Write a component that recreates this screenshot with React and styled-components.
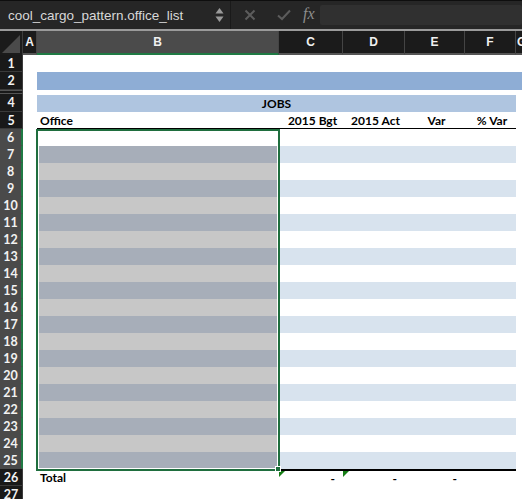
import React from 'react';
import styled, { createGlobalStyle } from 'styled-components';

const GlobalStyle = createGlobalStyle`
  html, body {
    margin: 0;
    padding: 0;
    background: #ffffff;
    overflow: hidden;
  }
  * { box-sizing: border-box; }
`;

const COLS = '23px 14px 242px 64px 62px 60px 51px 1fr';

const headers = ['2015 Bgt', '2015 Act', 'Var', '% Var'];

const App = () => {
  const dataRows = [];
  for (let n = 6; n <= 25; n++) {
    const odd = n % 2 === 1 && n > 6;
    dataRows.push(
      <SheetRow key={n} $h={17}>
        <RowHead $selected>{n}</RowHead>
        <Cell />
        <Cell $bg={n === 6 ? '#ffffff' : odd ? '#a7aeb9' : '#c7c7c7'} $inset />
        {headers.map((h) => (
          <Cell key={h} $bg={odd ? '#d8e3ee' : '#ffffff'} />
        ))}
        <Cell />
      </SheetRow>
    );
  }

  return (
    <Page>
      <GlobalStyle />
      <Toolbar>
        <NameBox>
          <NameText>cool_cargo_pattern.office_list</NameText>
          <Spinner>
            <svg width="9" height="16" viewBox="0 0 9 16">
              <path d="M4.5 1 L8.5 6.5 L0.5 6.5 Z" fill="#9a9a9a" />
              <path d="M4.5 15 L8.5 9.5 L0.5 9.5 Z" fill="#9a9a9a" />
            </svg>
          </Spinner>
        </NameBox>
        <ToolDivider />
        <ToolIcon>
          <svg width="12" height="12" viewBox="0 0 12 12">
            <path d="M1.5 1.5 L10.5 10.5 M10.5 1.5 L1.5 10.5" stroke="#5c5c5c" strokeWidth="2" />
          </svg>
        </ToolIcon>
        <ToolIcon>
          <svg width="14" height="12" viewBox="0 0 14 12">
            <path d="M1 6.5 L5 10 L13 1.5" stroke="#5c5c5c" strokeWidth="2" fill="none" />
          </svg>
        </ToolIcon>
        <FxLabel>fx</FxLabel>
        <FormulaInput />
      </Toolbar>

      <Sheet>
        <HeaderRow>
          <Corner>
            <svg width="18" height="18" viewBox="0 0 18 18">
              <path d="M18 0 L18 18 L0 18 Z" fill="#4a4a4a" />
            </svg>
          </Corner>
          <ColHead>A</ColHead>
          <ColHead $selected>B</ColHead>
          <ColHead>C</ColHead>
          <ColHead>D</ColHead>
          <ColHead>E</ColHead>
          <ColHead>F</ColHead>
          <ColHead $left>G</ColHead>
        </HeaderRow>

        <SheetRow $h={17}>
          <RowHead>1</RowHead>
        </SheetRow>

        <SheetRow $h={18}>
          <RowHead>2</RowHead>
          <Cell />
          <Band $bg="#8eadd5" $span="3 / -1" />
        </SheetRow>

        <HiddenRow>
          <HiddenHead />
        </HiddenRow>

        <SheetRow $h={18}>
          <RowHead>4</RowHead>
          <Cell />
          <Band $bg="#afc5e0" $span="3 / 8" $top>
            JOBS
          </Band>
        </SheetRow>

        <SheetRow $h={17}>
          <RowHead>5</RowHead>
          <Cell />
          <Cell $bold $line="bottom">Office</Cell>
          {headers.map((h) => (
            <Cell key={h} $bold $align="center" $line="bottom">
              {h}
            </Cell>
          ))}
        </SheetRow>

        {dataRows}

        <SheetRow $h={17}>
          <RowHead $dark>26</RowHead>
          <Cell />
          <Cell $bold>Total</Cell>
          <Cell $bold $align="right" $line="top" $flag>-</Cell>
          <Cell $bold $align="right" $line="top" $flag>-</Cell>
          <Cell $bold $align="right" $line="top">-</Cell>
          <Cell $line="top" />
        </SheetRow>

        <SheetRow $h={17}>
          <RowHead $dark>27</RowHead>
        </SheetRow>

        <Selection>
          <Handle />
        </Selection>
      </Sheet>
    </Page>
  );
};

const Page = styled.div`
  width: 522px;
  height: 499px;
  overflow: hidden;
  background: #ffffff;
`;

const Toolbar = styled.div`
  display: flex;
  align-items: center;
  height: 31px;
  background: #262626;
  border-top: 1px solid #0e0e0e;
  border-bottom: 2px solid #9b9b9b;
`;

const NameBox = styled.div`
  display: flex;
  align-items: center;
  justify-content: space-between;
  width: 230px;
  padding: 0 8px 0 8px;
`;

const NameText = styled.span`
  font-family: 'Liberation Sans', Arial, sans-serif;
  font-size: 13.5px;
  color: #d8d8d8;
`;

const Spinner = styled.span`
  display: flex;
  margin-right: -2px;
`;

const ToolDivider = styled.div`
  width: 1px;
  height: 28px;
  background: #1a1a1a;
`;

const ToolIcon = styled.span`
  display: flex;
  align-items: center;
  justify-content: center;
  width: 30px;
  margin-left: 4px;
`;

const FxLabel = styled.span`
  font-family: 'Liberation Serif', 'Times New Roman', serif;
  font-style: italic;
  font-size: 16px;
  color: #8d8d8d;
  margin: 0 5px 0 4px;
  padding-bottom: 2px;
`;

const FormulaInput = styled.div`
  flex: 1;
  height: 20px;
  background: #303030;
  border-radius: 2px;
`;

const Sheet = styled.div`
  position: relative;
`;

const HeaderRow = styled.div`
  display: grid;
  grid-template-columns: ${COLS};
  height: 24px;
  background: #1b1b1b;
`;

const Corner = styled.div`
  display: flex;
  align-items: flex-end;
  justify-content: flex-end;
  padding: 0 2px 2px 0;
  border-right: 1px solid #3c3c3c;
`;

const ColHead = styled.div`
  display: flex;
  align-items: center;
  justify-content: ${(p) => (p.$left ? 'flex-start' : 'center')};
  padding-left: ${(p) => (p.$left ? '1px' : '0')};
  font-family: 'Liberation Sans', Arial, sans-serif;
  font-weight: 700;
  font-size: 12px;
  color: #f0f0f0;
  background: ${(p) => (p.$selected ? '#4b4b4b' : 'transparent')};
  border-right: 1px solid #444;
  border-bottom: 2px solid ${(p) => (p.$selected ? '#1f7a44' : '#555')};
`;

const SheetRow = styled.div`
  display: grid;
  grid-template-columns: ${COLS};
  height: ${(p) => p.$h}px;
`;

const RowHead = styled.div`
  display: flex;
  align-items: center;
  justify-content: center;
  font-family: Lato, 'Liberation Sans', sans-serif;
  font-weight: 700;
  font-size: 12.5px;
  color: #f2f2f2;
  background: ${(p) => (p.$selected ? '#4a4a4a' : '#191919')};
  border-right: ${(p) => (p.$selected ? '2px solid #1f7a44' : '1px solid #3c3c3c')};
  border-bottom: 1px solid ${(p) => (p.$selected ? '#4a4a4a' : '#3a3a3a')};
`;

const HiddenRow = styled.div`
  display: grid;
  grid-template-columns: ${COLS};
  height: 4px;
`;

const HiddenHead = styled.div`
  background: #191919;
  border-top: 1px solid #555;
  border-bottom: 1px solid #555;
  border-right: 1px solid #3c3c3c;
`;

const Cell = styled.div`
  position: relative;
  display: flex;
  align-items: center;
  justify-content: ${(p) =>
    p.$align === 'center' ? 'center' : p.$align === 'right' ? 'flex-end' : 'flex-start'};
  padding: ${(p) => (p.$align === 'right' ? '0 8px 0 0' : '0 0 0 3px')};
  margin: ${(p) => (p.$inset ? '0 2px 0 2px' : '0')};
  font-family: Lato, 'Liberation Sans', sans-serif;
  font-weight: ${(p) => (p.$bold ? 700 : 400)};
  font-size: 12px;
  color: #000;
  background: ${(p) => p.$bg || '#ffffff'};
  border-top: ${(p) => (p.$line === 'top' ? '2px solid #000' : 'none')};
  border-bottom: ${(p) => (p.$line === 'bottom' ? '1px solid #000' : 'none')};
  white-space: nowrap;

  &::before {
    content: '';
    display: ${(p) => (p.$flag ? 'block' : 'none')};
    position: absolute;
    left: 0;
    top: 0;
    border-top: 6px solid #167d16;
    border-right: 6px solid transparent;
  }
`;

const Band = styled.div`
  grid-column: ${(p) => p.$span};
  display: flex;
  align-items: center;
  justify-content: center;
  margin-top: ${(p) => (p.$top ? '1px' : '0')};
  font-family: Lato, 'Liberation Sans', sans-serif;
  font-weight: 700;
  font-size: 12px;
  color: #000;
  background: ${(p) => p.$bg};
`;

const Selection = styled.div`
  position: absolute;
  left: 36px;
  top: 98px;
  width: 244px;
  height: 342px;
  border: 2px solid #1f6e3e;
  box-shadow: inset 0 0 0 1px #ffffff;
  pointer-events: none;
`;

const Handle = styled.div`
  position: absolute;
  right: -3px;
  bottom: -3px;
  width: 6px;
  height: 6px;
  background: #1f6e3e;
  border: 1px solid #ffffff;
`;

export default App;
